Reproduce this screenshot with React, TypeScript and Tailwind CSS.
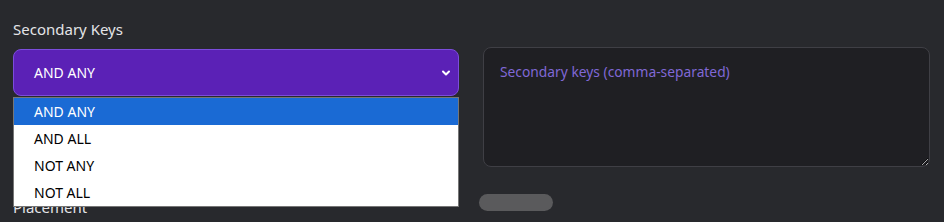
import { ChevronDown } from 'lucide-react';

const options = ['AND ANY', 'AND ALL', 'NOT ANY', 'NOT ALL'];

export default function App() {
  return (
    <div className="h-[222px] w-full overflow-hidden bg-[#28292d] px-[13px] pt-[18px] text-[#e5e7eb]" style={{ fontFamily: '"Noto Sans", "Open Sans", sans-serif' }}>
      <div className="grid grid-cols-[446px_447px] gap-x-[24px]">
        <div className="relative">
          <label className="block text-[15px] leading-[22px] text-[#e4e4e7]">Secondary Keys</label>
          <div className="mt-[9px] flex h-[47px] items-center justify-between rounded-[8px] border border-[#7c4ddb] bg-[#5b21b6] pl-[20px] pr-[6px] text-[14px] text-white">
            <span>AND ANY</span>
            <ChevronDown className="h-[12px] w-[12px]" strokeWidth={4} />
          </div>
          <ul className="absolute left-0 top-[79px] z-10 w-[446px] border border-[#767676] bg-white text-[14px] text-black">
            {options.map((o, i) => (
              <li key={o} className={`flex h-[27px] items-center pl-[20px] ${i === 0 ? 'bg-[#1a6ad4] text-white' : ''}`}>{o}</li>
            ))}
          </ul>
          <div className="mt-[100px] text-[15px] leading-[22px] text-[#e4e4e7]">Placement</div>
        </div>
        <div>
          <textarea
            placeholder="Secondary keys (comma-separated)"
            className="mt-[29px] block h-[120px] w-full resize-y rounded-[8px] border border-[#3f3f45] bg-[#1f1f23] px-[16px] py-[14px] text-[13.8px] outline-none placeholder:text-[#8068d6]"
          />
          <div className="-ml-[4px] mt-[27px] h-[17px] w-[74px] rounded-full bg-[#5a5a5c]" />
        </div>
      </div>
    </div>
  );
}
